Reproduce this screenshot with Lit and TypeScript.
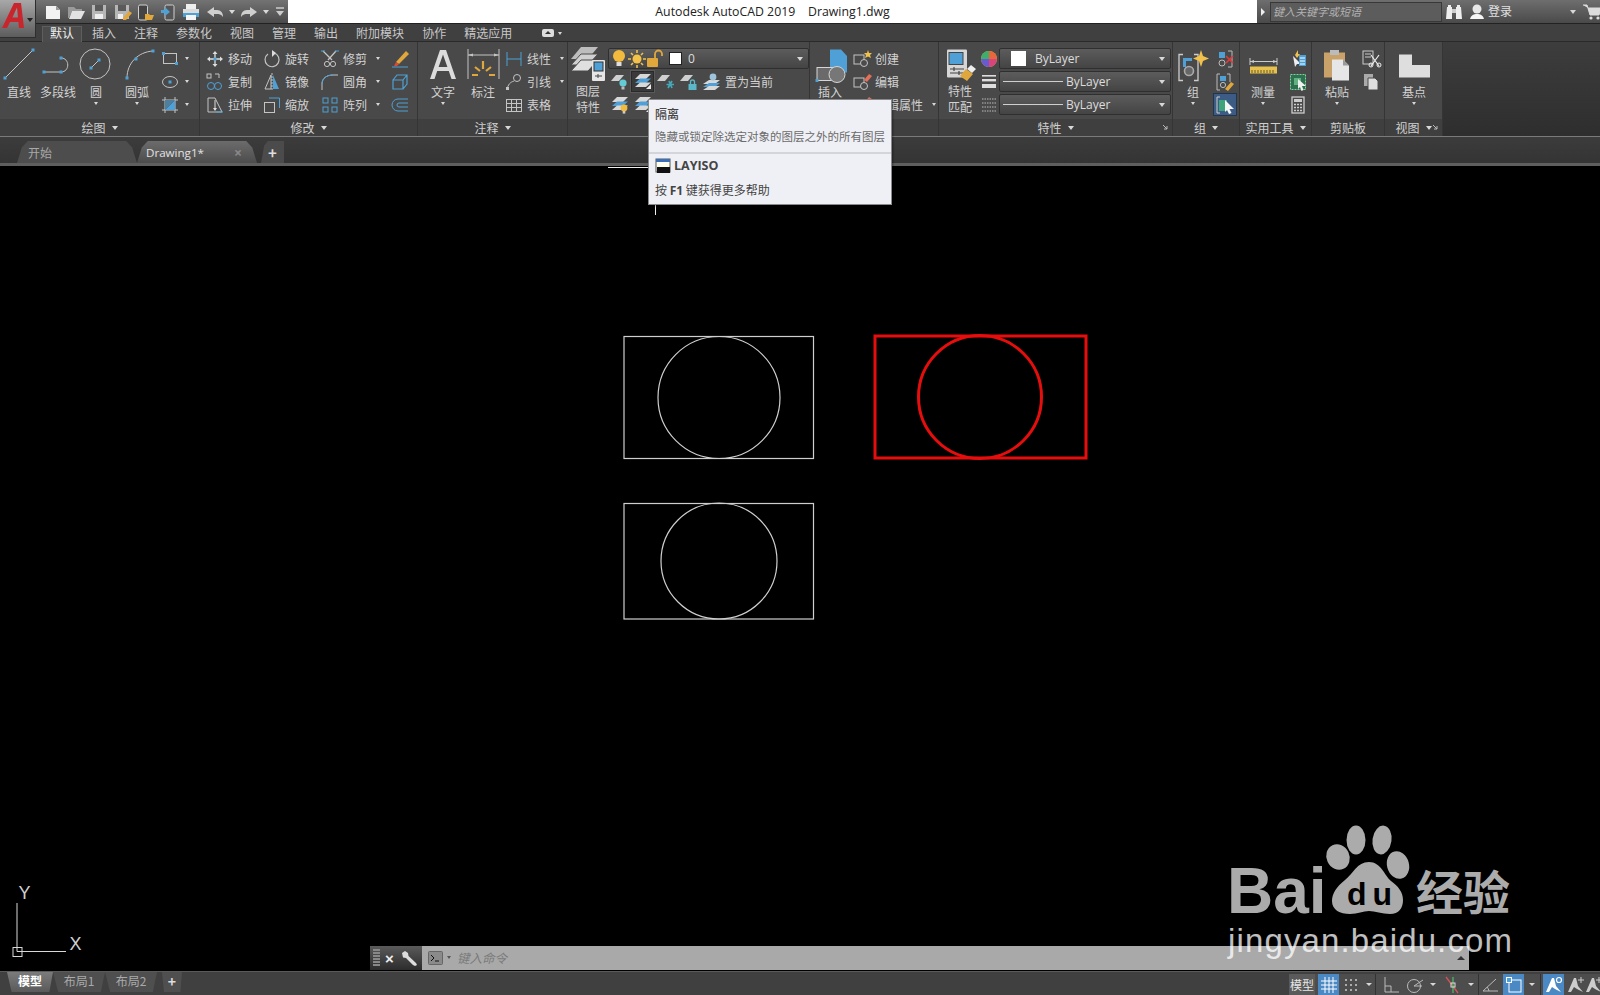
import { LitElement, html, css, svg } from "lit";
import { customElement } from "lit/decorators.js";

const B = "#4fa0d6", G = "#c4c4c4", L = "#e2e2e2", O = "#e0a83c", D = "#8e8e8e";
const ic = (c: any, s = 20) => html`<svg width=${s} height=${s} viewBox="0 0 ${s} ${s}">${c}</svg>`;
const pt = (x: number, y: number) => svg`<rect x=${x - 1.5} y=${y - 1.5} width="3" height="3" fill=${B}/>`;
const layerPlate = (y = 3) => svg`<path d="M1 ${y + 6}L6 ${y}H14L9 ${y + 6}Z" fill="#cfcfcf"/>`;
const stack = svg`<path d="M2 7L7 2H18L13 7Z" fill="#d8d8d8"/><path d="M2 11L7 6.5H18L13 11Z" fill=${B}/><path d="M2 15L7 10.5H18L13 15Z" fill="#d8d8d8"/>`;

const icons: Record<string, any> = {
  new: svg`<path d="M3 4H13L17 8V17H3Z" fill="#f2f2f2"/><path d="M13 4V8H17Z" fill="#999"/>`,
  open: svg`<path d="M2 5H8L10 7H16V9H6L3 16H2Z" fill="#9a9a9a"/><path d="M6 9H19L15 17H3Z" fill="#e2e2e2"/>`,
  save: svg`<path d="M3 3H17V17H3Z" fill="#b6b6b6"/><rect x="6" y="3" width="8" height="6" fill="#5a5a5a"/><rect x="6" y="12" width="8" height="5" fill="#eee"/>`,
  saveas: svg`<path d="M3 3H17V17H3Z" fill="#b6b6b6"/><rect x="6" y="3" width="8" height="6" fill="#5a5a5a"/><rect x="6" y="12" width="5" height="5" fill="#eee"/><path d="M11 16L17 9L20 11L14 18H11Z" fill=${O}/>`,
  phoneOpen: svg`<rect x="3.5" y="3" width="9" height="15" rx="1.5" fill="#444" stroke="#d0d0d0"/><path d="M10 12H14L15 13H19L17 18H10Z" fill=${O}/>`,
  phoneSave: svg`<rect x="7" y="3" width="9" height="15" rx="1.5" fill="#555" stroke="#d0d0d0"/><path d="M3 8H7V5L12 10L7 14V11H3Z" fill=${B}/>`,
  print: svg`<rect x="5" y="2" width="10" height="5" fill="#eee"/><rect x="2" y="7" width="16" height="4" fill="#dcdcdc"/><rect x="2" y="11" width="16" height="4" fill=${B}/><rect x="5" y="13" width="10" height="5" fill="#f4f4f4"/>`,
  undo: svg`<path d="M2 10L9 5V8H12C16 8 18 11 18 15C16 12 14 12 12 12H9V15Z" fill="#cfcfcf"/>`,
  redo: svg`<path d="M18 10L11 5V8H8C4 8 2 11 2 15C4 12 6 12 8 12H11V15Z" fill="#cfcfcf"/>`,
  custom: svg`<path d="M3 3H11" stroke="#ccc" stroke-width="1.5"/><path d="M3 6H11L7 11Z" fill="#ccc"/>`,
  line: svg`<path d="M6 33L34 5" stroke=${G} stroke-width="1"/>${pt(6, 33)}${pt(34, 5)}`,
  pline: svg`<path d="M6 27H23C32 27 32 13 23 13" fill="none" stroke=${G}/>${pt(6, 27)}${pt(23, 27)}${pt(23, 13)}`,
  circle: svg`<circle cx="19" cy="19" r="15" fill="none" stroke=${G}/><path d="M15 23L23 15" stroke=${G}/>${pt(15, 23)}${pt(23, 15)}`,
  arc: svg`<path d="M10 33C10 18 21 7 36 6" fill="none" stroke=${G}/>${pt(10, 33)}${pt(19, 14)}${pt(36, 6)}`,
  rect: svg`<rect x="3.5" y="4.5" width="13" height="10" fill="none" stroke=${G}/>${pt(3.5, 4.5)}${pt(16.5, 14.5)}`,
  ellipse: svg`<ellipse cx="10" cy="10" rx="7.5" ry="5.5" fill="none" stroke=${G}/>${pt(10, 10)}`,
  hatch: svg`<path d="M5 2V18M15 2V18M2 5H18M2 15H18" stroke=${G}/><path d="M5 15L15 5V15Z" fill=${B}/><path d="M5 5H15L5 15Z" fill="#4f7f9f"/>`,
  move: svg`<path d="M10 2L12.5 5H7.5ZM10 18L7.5 15H12.5ZM2 10L5 7.5V12.5ZM18 10L15 12.5V7.5Z" fill="#ddd"/><path d="M10 4V16M4 10H16" stroke="#ddd" stroke-width="1.3"/><rect x="8.5" y="8.5" width="3" height="3" fill=${B}/>`,
  rotate: svg`<path d="M6 5A7 7 0 1 0 12 4" fill="none" stroke=${G} stroke-width="1.2"/><path d="M10 1V8L14 4Z" fill="#ddd"/>`,
  trim: svg`<path d="M3 2L12 11M16 2L8 11" stroke=${G} stroke-width="1.3"/><circle cx="7" cy="15" r="2.6" fill="none" stroke=${G}/><circle cx="13" cy="15" r="2.6" fill="none" stroke=${G}/><path d="M1 2H5M15 2H19" stroke=${B}/>`,
  erase: svg`<path d="M6 13L16 2L19 5L9 15Z" fill=${O}/><path d="M6 13L9 15L7 17H4Z" fill="#d94a3a"/><path d="M2 18H18" stroke=${B}/>`,
  copy: svg`<rect x="2" y="2" width="4" height="4" fill="none" stroke=${G}/><path d="M10 2H14V6" fill="none" stroke=${G}/><circle cx="6" cy="14" r="3.5" fill="none" stroke=${B}/><circle cx="13" cy="14" r="3.5" fill="none" stroke=${B}/>`,
  mirror: svg`<path d="M9 3V17H3Z" fill="none" stroke=${G}/><path d="M11 3V17H17Z" fill=${B}/><path d="M10 1V19" stroke=${G} stroke-dasharray="2 1"/>`,
  fillet: svg`<path d="M2 18V12C2 6 7 3 13 3H18" fill="none" stroke=${G}/><path d="M2 12C2 6 7 3 13 3" fill="none" stroke=${B}/>`,
  d3: svg`<path d="M3 8H13V17H3Z M3 8L7 3H17V12L13 17M13 8L17 3" fill="none" stroke=${B} stroke-width="1.2"/>`,
  stretch: svg`<path d="M3 3H10L17 17H3Z" fill="none" stroke=${G}/><path d="M10 5V15" stroke="#ddd"/><path d="M8 13H12L10 16Z" fill="#ddd"/><path d="M11 17H18" stroke=${B}/>`,
  scale: svg`<rect x="2.5" y="7.5" width="10" height="10" fill="none" stroke=${G}/><path d="M7 3H17.5V13" fill="none" stroke=${B}/>`,
  array: svg`<g fill="none" stroke=${B}><rect x="3" y="3" width="5" height="5"/><rect x="12" y="3" width="5" height="5"/><rect x="3" y="12" width="5" height="5"/><rect x="12" y="12" width="5" height="5"/></g>`,
  offset: svg`<path d="M18 4H8A6 6 0 0 0 8 16H18M18 8H9A2 2 0 0 0 9 12H18" fill="none" stroke=${B}/>`,
  textA: svg`<path d="M7 34L17 5H23L33 34H28.5L25.8 26H14.2L11.5 34ZM15.6 22H24.4L20 9.5Z" fill="#dcdcdc" fill-rule="evenodd"/>`,
  dim: svg`<path d="M5 4V34M36 4V34M5 10H36" stroke=${G} fill="none"/><path d="M5 10L10 8.5V11.5ZM36 10L31 8.5V11.5Z" fill=${G}/><path d="M20 16V24M12 22L17 26M28 22L23 26M9 30H15M26 30H32" stroke=${O} stroke-width="2.2"/>`,
  linear: svg`<path d="M3 3V17M17 3V17M3 10H17" stroke=${B} fill="none"/>`,
  leader: svg`<path d="M3 17C5 10 8 10 10 9" fill="none" stroke=${G}/><circle cx="13" cy="6" r="3.5" fill="none" stroke=${G}/><rect x="2" y="15" width="3" height="3" fill=${G}/>`,
  table: svg`<rect x="2.5" y="4.5" width="15" height="12" fill="none" stroke=${G}/><path d="M2.5 8.5H17.5M2.5 12.5H17.5M7.5 4.5V16.5M12.5 4.5V16.5" stroke=${G}/>`,
  layerProps: svg`<path d="M3 14L13 2H30L20 14Z" fill="#bdbdbd"/><path d="M3 20L13 9H30L20 20Z" fill="#d0d0d0" stroke="#4b4b4b"/><path d="M3 26L13 15H30L20 26Z" fill="#e0e0e0" stroke="#4b4b4b"/><rect x="24" y="15" width="13" height="21" rx="1" fill="#e6e6e6"/><rect x="26" y="17" width="9" height="9" fill=${B} stroke="#333"/><path d="M27 31H34M30 29V33" stroke="#444"/>`,
  bulbOn: svg`<circle cx="10" cy="7" r="6" fill="#f2bb3e"/><rect x="7.5" y="13" width="5" height="4" fill="#ddd"/>`,
  sun: svg`<circle cx="10" cy="10" r="4.5" fill="#f2c24a"/><path d="M10 1V4M10 16V19M1 10H4M16 10H19M4 4L6 6M14 14L16 16M16 4L14 6M4 16L6 14" stroke="#f2c24a" stroke-width="1.6"/>`,
  lock: svg`<rect x="2" y="9" width="11" height="9" rx="1" fill=${O}/><path d="M10 9V5A3.5 3.5 0 0 1 17 5V7" fill="none" stroke=${O} stroke-width="1.8"/>`,
  lay1: svg`${layerPlate()}<circle cx="13" cy="11" r="3.6" fill="#63cbd6"/><rect x="11.5" y="14.5" width="3" height="3" fill="#bbb"/>`,
  layIso: svg`${stack}<path d="M13 17L18 12V17Z" fill="#eee"/>`,
  lay3: svg`${layerPlate()}<path d="M13 9L16 16M16 9L12 16M10.5 12.5H18" stroke="#45a8b8" stroke-width="1.7"/>`,
  lay4: svg`${layerPlate()}<rect x="9.5" y="12" width="8" height="6" fill="#5ab8c8"/><path d="M11.5 12V10A2 2 0 0 1 15.5 10V12" fill="none" stroke="#5ab8c8" stroke-width="1.3"/>`,
  laySet: svg`<path d="M1 12L7 8H18L13 12Z" fill="#d8d8d8"/><path d="M1 15L7 11H18L13 15Z" fill=${B}/><path d="M1 18L7 14H18L13 18Z" fill="#d8d8d8"/><circle cx="11" cy="5" r="3.4" fill="#9ec4dc"/>`,
  lay5: svg`${stack}<circle cx="14" cy="13" r="3.4" fill="#f2bb3e"/><rect x="12.7" y="16" width="2.6" height="2.6" fill="#ccc"/>`,
  insert: svg`<path d="M20 4.5H31L37 11V27.5H20Z" fill=${B}/><rect x="7" y="22.5" width="20" height="13" fill="#6a6a6a" stroke="#d6d6d6"/>${pt(7, 35.5)}<circle cx="27" cy="29.5" r="8" fill="#777" stroke="#d6d6d6"/>`,
  blkCreate: svg`<rect x="2" y="6" width="10" height="9" fill="none" stroke=${G}/><circle cx="12" cy="14" r="3.5" fill="#4b4b4b" stroke=${G}/><path d="M16 1L17 4L20 4L18 6L19 9L16 7.5L13 9L14 6L12 4L15 4Z" fill="#f1c14c"/>`,
  blkEdit: svg`<rect x="2" y="6" width="10" height="9" fill="none" stroke=${G}/><circle cx="12" cy="14" r="3.5" fill="#4b4b4b" stroke=${G}/><path d="M12 8L17 2L20 4L15 10Z" fill="#e2705a"/>`,
  match: svg`<rect x="7" y="4.5" width="20" height="28" rx="1" fill="#d6d6d6"/><rect x="9" y="7.5" width="14" height="12" fill=${B} stroke="#444"/><path d="M10 24H24M10 28H24M14 22V26M19 26V30" stroke="#444" stroke-width="1.2"/><path d="M20 31L26 24L33 29L27 36Z" fill=${O}/><path d="M27 24L31 20L36 24L32 28Z" fill="#eee"/>`,
  wheel: svg`<circle cx="10" cy="10" r="8" fill="#d8b13a"/><path d="M10 10L10 2A8 8 0 0 1 18 10Z" fill="#e8663c"/><path d="M10 10L18 10A8 8 0 0 1 10 18Z" fill="#d8457a"/><path d="M10 10L10 18A8 8 0 0 1 2 10Z" fill="#6a5ad0"/><path d="M10 10L2 10A8 8 0 0 1 10 2Z" fill="#3cb06a"/>`,
  weight: svg`<rect x="3" y="3" width="14" height="1.6" fill="#ddd"/><rect x="3" y="7" width="14" height="2.4" fill="#ddd"/><rect x="3" y="12" width="14" height="4" fill="#ddd"/>`,
  ltype: svg`<path d="M3 4H17M3 8H17M3 12H17M3 16H17" stroke="#bbb" stroke-dasharray="1.5 1"/>`,
  group: svg`<path d="M10 9.5H6V35.5H10M21 9.5H25V35.5H21" fill="none" stroke="#ccc" stroke-width="1.3"/><path d="M10 13H19V16H13V22H10Z" fill=${B}/><circle cx="16" cy="26" r="4.5" fill="#666" stroke="#aaa" stroke-width="1.6"/><path d="M28 5L30 11L36 13.5L30 16L28 22L26 16L20 13.5L26 11Z" fill="#f1c14c"/>`,
  ungroup: svg`<rect x="4" y="3" width="6" height="6" fill=${B}/><circle cx="7" cy="14" r="3" fill="none" stroke="#bbb"/><path d="M13 2H17V18H13" fill="none" stroke="#bbb"/><path d="M11 7L18 14M18 7L11 14" stroke="#e03b3b" stroke-width="1.6"/>`,
  grpEdit: svg`<path d="M5 2H2V18H5M12 2H15V10" fill="none" stroke="#bbb"/><rect x="5" y="4" width="6" height="5" fill=${B}/><circle cx="8" cy="13" r="2.6" fill="none" stroke="#bbb"/><path d="M10 17L16 10L19 12L13 19Z" fill=${O}/>`,
  grpSel: svg`<path d="M5 2H2V18H5" fill="none" stroke="#ccc"/><rect x="4" y="5" width="8" height="11" fill="#3ea27a"/><path d="M10 5L19 14H14.5L16.5 18L14 19L12 15L10 17Z" fill="#f5f5f5"/>`,
  measure: svg`<path d="M7 13V20M34 13V20M7 16.5H34" stroke="#ccc" fill="none"/><path d="M7 16.5L11 15V18ZM34 16.5L30 15V18Z" fill="#ccc"/><rect x="7" y="21.5" width="27" height="7" fill="#e6c150"/><path d="M9 25V28M12 25V28M15 25V28M18 25V28M21 25V28M24 25V28M27 25V28M30 25V28" stroke="#6a5a20"/>`,
  qsel: svg`<path d="M5 7L13 15H9L7 18Z" fill="#eee"/><rect x="11" y="6" width="7" height="11" fill=${B}/><path d="M12 9H17M12 12H17M12 15H17" stroke="#fff"/><path d="M7 6L10 1V5L12 5L9 9Z" fill="#f1c14c"/>`,
  qsel2: svg`<rect x="2.5" y="2.5" width="15" height="15" fill="#2d6f4f" stroke="#7fd49c" stroke-dasharray="2 1"/><rect x="6" y="6" width="7" height="7" fill="#63b083"/><path d="M10 7L18 14H14L15.5 18L13.5 19L12 15L10 17Z" fill="#f0f0f0"/>`,
  calc: svg`<rect x="4" y="2" width="12" height="16" fill="none" stroke="#ccc" stroke-width="1.3"/><rect x="6" y="4" width="8" height="3" fill="#ccc"/><path d="M6 9.5H14M6 12.5H14M6 15.5H14" stroke="#ccc" stroke-dasharray="2 1" stroke-width="1.6"/>`,
  paste: svg`<path d="M7 7.5H28V32.5H7Z" fill="#c9a269"/><rect x="13" y="5" width="9" height="5" fill="#bbb"/><path d="M15 14.5H26L32 20.5V35.5H15Z" fill="#e6e6e6"/><path d="M26 14.5V20.5H32Z" fill="#999"/>`,
  cut: svg`<rect x="2" y="2" width="10" height="13" fill="none" stroke="#ccc"/><path d="M4 5H10M4 8H10" stroke="#ccc"/><path d="M10 6L18 17M18 6L10 17" stroke="#eee" stroke-width="1.2"/><circle cx="10" cy="16" r="2" fill="none" stroke="#eee"/><circle cx="18" cy="16" r="2" fill="none" stroke="#eee"/>`,
  copy2: svg`<rect x="3" y="2" width="9" height="12" fill="#aaa"/><path d="M7 6H14L17 9V18H7Z" fill="#ddd" stroke="#4b4b4b"/>`,
  base: svg`<path d="M5 9.5H18V20H36V32.5H5Z" fill="#dedede"/>`,
  launch: svg`<path d="M2 2L6 6M6 3V6H3" stroke="#bbb" fill="none"/>`,
  wrench: svg`<path d="M2 4L5 2L8 4L8.5 7L16 14L17 16L15 17L13 16L6 9L3 8.5Z" fill="#ddd"/>`,
  cmd: svg`<rect x="1.5" y="2.5" width="14" height="13" rx="1" fill="#8a8a8a" stroke="#666"/><path d="M4 6L7 9L4 12M8 12H12" stroke="#111" fill="none"/>`,
  grid: svg`<path d="M6 2V18M10 2V18M14 2V18M2 6H18M2 10H18M2 14H18" stroke="#fff"/>`,
  dots: svg`<g fill="#ccc"><circle cx="5" cy="5" r="1"/><circle cx="10" cy="5" r="1"/><circle cx="15" cy="5" r="1"/><circle cx="5" cy="10" r="1"/><circle cx="10" cy="10" r="1"/><circle cx="15" cy="10" r="1"/><circle cx="5" cy="15" r="1"/><circle cx="10" cy="15" r="1"/><circle cx="15" cy="15" r="1"/></g>`,
  ortho: svg`<path d="M3 2V17H17M3 11H9V17" fill="none" stroke="#bbb"/>`,
  polar: svg`<circle cx="9" cy="11" r="6.5" fill="none" stroke="#bbb"/><path d="M9 11L18 5M9 11H17" stroke="#bbb"/>`,
  isnap: svg`<path d="M4 2L16 18" stroke="#d65454" stroke-width="1.3"/><path d="M11 2V18" stroke="#4fb46a" stroke-width="1.3"/><rect x="9" y="8" width="4" height="4" fill="none" stroke="#ddd"/>`,
  angle: svg`<path d="M16 4L3 16H18M9 16A8 8 0 0 0 7 12" fill="none" stroke="#bbb"/>`,
  box: svg`<rect x="5" y="5" width="12" height="12" fill="none" stroke="#fff"/><rect x="2.5" y="2.5" width="5" height="5" fill=${B} stroke="#fff"/>`,
  anno: svg`<path d="M2 17L8 3L10 3L12 11L17 17L11 14L8 12L5 17Z" fill="#fff"/><circle cx="15" cy="5" r="2.5" fill="none" stroke="#fff" stroke-width="1.2"/>`,
  anno2: svg`<path d="M2 17L8 3L10 3L12 11L17 17L11 14L8 12L5 17Z" fill="#ccc"/><path d="M15 2V8M12 5H18" stroke="#ccc"/>`,
  binoc: svg`<path d="M3 5H8V17H2ZM12 5H17L18 17H12Z" fill="#eee"/><rect x="8" y="7" width="4" height="4" fill="#ccc"/><path d="M4 3H7V5H4ZM13 3H16V5H13Z" fill="#eee"/>`,
  user: svg`<circle cx="10" cy="7" r="4.5" fill="#e8e8e8"/><path d="M3 17C4 13 7 12 10 12C13 12 16 13 17 17Z" fill="#f6f6f6"/>`,
  cart: svg`<path d="M1 3H5L8 13H17L19 6H6" fill="#ddd" stroke="#ddd"/><circle cx="9" cy="16" r="1.6" fill="#ddd"/><circle cx="16" cy="16" r="1.6" fill="#ddd"/>`,
  iso: svg`<rect x="1" y="1" width="14" height="13" fill="#ffffee" stroke="#555"/><rect x="1" y="1" width="14" height="3" fill="#3d6fb8"/><rect x="2" y="9" width="13" height="6" fill="#111"/>`,
};

const I = (n: string, s = 20) => ic(icons[n], s);
const caret = html`<i class="caret"></i>`;

const big = (label: any, icon: string, w: number, hasCaret = true, two = false) => html`
  <div class="big" style="width:${w}px">
    <div class="bigicon">${I(icon, 40)}</div>
    <div class=${two ? "lbl two" : "lbl"}>${label}</div>
    ${hasCaret ? caret : ""}
  </div>`;

const sm = (icon: string, text = "", c = false, active = false) => html`
  <div class=${active ? "sm on" : "sm"}>${I(icon)}${text ? html`<span>${text}</span>` : ""}${c ? caret : ""}</div>`;

const panel = (w: number, title: string, hasCaret: boolean, launcher: boolean, body: any) => html`
  <section class="panel" style="width:${w}px">
    <div class="pbody">${body}</div>
    <div class="ptitle"><span>${title}</span>${hasCaret ? caret : ""}${launcher ? html`<span class="launch">${I("launch", 8)}</span>` : ""}</div>
  </section>`;

const drop = (content: any, cls = "drop") => html`<div class=${cls}>${content}<i class="caret end"></i></div>`;
const layerRow = (items: string[], active = -1, extra: any = "") => html`
  <div class="lrow">${items.map((n, i) => html`<div class=${i === active ? "lcell on" : "lcell"}>${I(n)}</div>`)}${extra}</div>`;

@customElement("app-root")
export class AppRoot extends LitElement {
  static styles = css`
    :host { display: flex; flex-direction: column; position: relative; width: 1600px; height: 995px; overflow: hidden; background: #000;
      font-family: "Noto Sans CJK SC", "Noto Sans", sans-serif; font-size: 12px; color: #d2d2d2; }
    svg { display: block; flex: none; overflow: visible; }
    .caret { display: block; flex: none; width: 0; height: 0; border-left: 3.5px solid transparent; border-right: 3.5px solid transparent; border-top: 4px solid #d8d8d8; }
    .caret.end { margin-left: auto; }

    .titlebar { display: flex; height: 23px; flex: none; }
    .qat { width: 288px; flex: none; box-sizing: border-box; padding-left: 41.5px; display: flex; align-items: center; background: linear-gradient(#737373, #4a4a4a); }
    .qat .q { width: 23px; flex: none; display: flex; justify-content: center; }
    .qat .u { width: 20px; flex: none; display: flex; justify-content: center; }
    .qat .u.first { margin-left: 2.5px; }
    .qat .c { width: 14px; flex: none; display: flex; justify-content: center; }
    .logo { position: absolute; left: 0; top: 0; width: 36px; height: 38px; box-sizing: border-box; background: linear-gradient(#a8a8a8, #5c5c5c); border-right: 1px solid #2e2e2e; border-bottom: 1px solid #2e2e2e; z-index: 3; }
    .logo .caret { position: absolute; left: 27px; top: 18px; border-top-color: #222; }
    .doc { flex: 1; background: #fff; color: #222; display: flex; align-items: center; justify-content: center; font-family: "Open Sans", sans-serif; font-size: 12.3px; white-space: pre; }
    .right { width: 343px; flex: none; display: flex; align-items: center; background: linear-gradient(#6e6e6e, #4a4a4a); box-sizing: border-box; padding-left: 4px; }
    .tri { width: 0; height: 0; border-top: 4px solid transparent; border-bottom: 4px solid transparent; border-left: 4px solid #eee; margin-right: 5px; flex: none; }
    .search { width: 172px; height: 20px; flex: none; box-sizing: border-box; background: #5c5c5c; border: 1px solid #383838; color: #b2b2b2; font-style: italic; font-size: 11px; display: flex; align-items: center; padding: 0 0 2px 2px; margin-right: 2px; }
    .user { margin-left: 3px; }
    .login { margin-left: 1px; color: #e0e0e0; width: 81.5px; flex: none; padding-bottom: 2px; box-sizing: border-box; }
    .cartgap { width: 6.5px; flex: none; }
    .tabs { display: flex; flex: none; height: 19px; box-sizing: border-box; gap: 18px; padding: 1px 0 0 50px; align-items: center; background: #404040; border-top: 1px solid #222; border-bottom: 1px solid #2a2a2a; position: relative; }
    .tabs span { position: relative; line-height: 18px; white-space: nowrap; color: #c8c8c8; }
    .tabs span.act { color: #eee; }
    .tabs span.act::before { content: ""; position: absolute; z-index: 0; left: -8px; right: -8px; top: 2px; bottom: -1px; background: #4b4b4b; border: 1px solid #5e5e5e; border-bottom: none; }
    .tabs b { position: relative; font-weight: 400; }
    .pill { width: 12px; height: 8px; background: #ddd; border-radius: 2px; margin-left: 12px; position: relative; }
    .pill::after { content: ""; position: absolute; left: 3px; top: 2px; width: 0; height: 0; border-left: 3px solid transparent; border-right: 3px solid transparent; border-bottom: 3px solid #333; }
    .tabs .caret { margin-left: -14px; border-left-width: 2.5px; border-right-width: 2.5px; border-top-width: 3px; }

    .ribbon { display: flex; flex: none; height: 95px; background: linear-gradient(#3d3d3d, #2e2e2e); border-bottom: 1px solid #7a7a7a; box-sizing: border-box; }
    .panel { flex: none; box-sizing: border-box; display: flex; flex-direction: column; background: #494949; border-right: 1px solid #353535; position: relative; }
    .pbody { flex: 1; display: flex; min-height: 0; }
    .ptitle { height: 17px; flex: none; background: #3f3f3f; display: flex; align-items: center; justify-content: center; gap: 6px; color: #cfcfcf; }
    .launch { position: absolute; right: 3px; bottom: 5px; }
    .big { flex: none; display: flex; flex-direction: column; align-items: center; padding-top: 4px; box-sizing: border-box; }
    .bigicon { height: 37px; display: flex; align-items: center; justify-content: center; }
    .lbl { line-height: 18px; white-space: nowrap; text-align: center; }
    .lbl.two { line-height: 16px; }
    .big .caret { margin-top: 1px; border-left-width: 2.5px; border-right-width: 2.5px; border-top-width: 3px; }
    .col { flex: none; display: flex; flex-direction: column; padding-top: 5px; box-sizing: border-box; }
    .sm { height: 23px; display: flex; align-items: center; gap: 3px; white-space: nowrap; }
    .sm .caret { margin-left: 6px; border-left-width: 2.5px; border-right-width: 2.5px; border-top-width: 3px; }
    .sm.on { width: 22px; height: 21px; margin: 1px 0 1px -1px; background: #3c5c86; outline: 1px solid #23344e; justify-content: center; }
    .drawc .sm { gap: 5px; } .drawc .sm .caret { margin-left: 0; }
    .pad5 { width: 5px; flex: none; }
    .pad3 { width: 3px; flex: none; }
    .ml2 { margin-left: 2px; } .ml3 { margin-left: 3px; } .mlm1 { margin-left: -1px; }
    .w57 { width: 57px; } .w58 { width: 58px; } .w70 { width: 70px; }
    .wc { width: 20px; margin-left: -2px; }
    .layers { width: 201px; flex: none; display: flex; flex-direction: column; padding-top: 6px; box-sizing: border-box; }
    .drop { height: 21px; box-sizing: border-box; background: linear-gradient(#5c5c5c, #444); border: 1px solid #2f2f2f; border-radius: 2px; display: flex; align-items: center; padding: 0 5px 0 0; font-family: "Open Sans", sans-serif; color: #ddd; }
    .drop.lay { padding-left: 1px; }
    .drop.lay .lcell { width: 18px; }
    .lrow { height: 23px; display: flex; align-items: center; }
    .drop + .lrow { margin-top: 1px; }
    .lcell { width: 23.2px; height: 19px; flex: none; display: flex; align-items: center; justify-content: center; box-sizing: border-box; }
    .lrow .lcell { height: 21px; }
    .lcell.on { background: #3a3a3a; border: 1px solid #2a2a2a; box-shadow: 0 0 0 1px #5a5a5a; }
    .lrow span { margin-left: 1px; }
    .sw { width: 13px; height: 13px; background: #fff; border: 1px solid #222; margin: 0 6px 0 5px; flex: none; box-sizing: border-box; }
    .props { display: flex; flex-direction: column; gap: 2px; width: 172px; padding-top: 6px; box-sizing: border-box; flex: none; }
    .swb { width: 15px; height: 15px; background: #fff; margin: 0 9px 0 11px; flex: none; }
    .lline { width: 60px; height: 1px; background: #cfcfcf; margin: 0 3px 0 3px; flex: none; }

    .doctabs { flex: none; height: 26px; background: linear-gradient(#3c3c3c, #343434); display: flex; align-items: flex-end; padding-left: 17px; box-sizing: border-box; }
    .dt { height: 22px; display: flex; align-items: center; flex: none; box-sizing: border-box; clip-path: polygon(0 100%, 4% 30%, 9% 0, 91% 0, 96% 30%, 100% 100%); }
    .dt.a { width: 120px; background: #4d4d4d; color: #a8a8a8; padding-left: 11px; }
    .dt.b { width: 120px; background: linear-gradient(#6c6c6c, #4c4c4c); color: #e2e2e2; padding-left: 9px; font-family: "Open Sans", sans-serif; font-size: 11.6px; justify-content: space-between; padding-right: 15px; }
    .dt.c { width: 23px; background: #4b4b4b; margin-left: 4px; justify-content: center; color: #ddd; font-size: 15px; font-weight: 700; clip-path: polygon(0 100%, 14% 20%, 30% 0, 100% 0, 100% 100%); }
    .dt.b i { font-style: normal; color: #888; font-weight: 700; font-size: 14px; }
    .strip { height: 3px; flex: none; background: #5e5e5e; }

    .canvas { flex: 1; min-height: 0; position: relative; background: #000; }
    .drawing { position: absolute; inset: 0; width: 100%; height: 100%; }
    .drawing text { font-family: "Liberation Sans", sans-serif; font-weight: 400; }
    .cmdline { position: absolute; left: 370px; right: 131px; bottom: 1px; height: 24px; display: flex; background: #a9a9a9; }
    .cmdleft { width: 52px; flex: none; background: linear-gradient(#5a5a5a, #2c2c2c); display: flex; align-items: center; box-sizing: border-box; padding-left: 3px; color: #eee; }
    .grip { width: 7px; height: 18px; flex: none; background: repeating-linear-gradient(#888 0 2px, transparent 2px 3px); margin-right: 3px; }
    .cmdx { font-family: "Liberation Sans", sans-serif; font-weight: 700; font-size: 15px; width: 13px; text-align: center; margin-right: 4px; }
    .cmdr { flex: 1; display: flex; align-items: center; padding: 0 0 1px 5px; color: #7a7a7a; font-style: italic; font-size: 12.5px; }
    .cmdr .caret { margin: 0 6px 0 3px; border-left-width: 2.5px; border-right-width: 2.5px; border-top-width: 3px; border-top-color: #555; }
    .cmdup { margin-left: auto; margin-right: 4px; width: 0; height: 0; border-left: 4px solid transparent; border-right: 4px solid transparent; border-bottom: 4px solid #333; }
    .mark { position: absolute; left: 1220px; top: 640px; width: 300px; height: 165px; pointer-events: none; }
    .mark text { font-family: "Liberation Sans", sans-serif; }
    .cjk { font-family: "Noto Sans CJK SC", sans-serif !important; }

    .status { flex: none; height: 24px; background: #404040; border-top: 1px solid #5a5a5a; box-sizing: border-box; display: flex; align-items: flex-end; padding-left: 7px; position: relative; }
    .lt { height: 20px; display: flex; align-items: center; justify-content: center; flex: none; color: #aaa; background: #4f4f4f; clip-path: polygon(0 0, 100% 0, 92% 100%, 10% 100%); align-self: flex-start; padding-bottom: 3px; box-sizing: border-box; }
    .lt.a { width: 46px; background: linear-gradient(#7b7b7b, #5a5a5a); color: #fff; font-weight: 700; }
    .lt.m { width: 52px; }
    .lt.p { width: 20px; margin-left: 5px; color: #ddd; font-weight: 700; font-size: 14px; }
    .stright { margin-left: auto; display: flex; align-items: flex-end; height: 21px; width: 311px; overflow: hidden; flex: none; background: #4d4d4d; }
    .st { height: 21px; flex: none; display: flex; align-items: center; justify-content: center; }
    .st .caret { border-left-width: 3px; border-right-width: 3px; border-top-width: 3.5px; }
    .st.blue { background: #4a89c4; }
    .st.label { background: #5a5a5a; color: #e6e6e6; margin-right: 3px; }
    .st.sep { border-left: 1px solid #333; box-sizing: border-box; }
    .mb4 { margin-left: 4px; }

    .tip { position: absolute; left: 648px; top: 99px; width: 244px; height: 106px; box-sizing: border-box; background: #eff0f5; border: 1px solid #8a8a8a; color: #4a4a4a; padding: 4px 6px; z-index: 4; box-shadow: 1px 1px 2px rgba(0,0,0,.4); }
    .tip .h { font-weight: 500; line-height: 20px; color: #444; }
    .tip .d { line-height: 22px; margin-top: 1px; color: #6b6b6b; white-space: nowrap; font-size: 11.5px; }
    .tip hr { border: none; border-top: 2px solid #d4d5da; margin: 5px -6px 1px; }
    .tip .cmd { display: flex; align-items: center; gap: 3px; font-family: "Open Sans", sans-serif; font-weight: 700; font-size: 12.5px; line-height: 22px; color: #444; margin-bottom: 1px; }
    .tip .help { line-height: 24px; color: #444; }
    .tip .help b { font-family: "Open Sans", sans-serif; }
  `;

  render() {
    return html`
      <div class="titlebar">
        <div class="qat">
          ${["new", "open", "save", "saveas", "phoneOpen", "phoneSave", "print"].map((n) => html`<div class="q">${I(n)}</div>`)}
          <div class="u first">${I("undo")}</div><div class="c">${caret}</div>
          <div class="u">${I("redo")}</div><div class="c">${caret}</div>
          <div class="c">${I("custom", 14)}</div>
        </div>
        <div class="doc">Autodesk AutoCAD 2019    Drawing1.dwg</div>
        <div class="right">
          <i class="tri"></i>
          <div class="search">键入关键字或短语</div>
          ${I("binoc")}<span class="user">${I("user")}</span>
          <div class="login">登录</div>
          ${caret}<span class="cartgap"></span>${I("cart")}
        </div>
      </div>
      <div class="logo">
        <svg width="26" height="30" viewBox="0 0 26 30"><path d="M2 28L14 3H21L24 28H19L18.4 22H10L7 28ZM12.4 17.5H18L17 7.5Z" fill="#c8262c" fill-rule="evenodd"/></svg>
        <i class="caret"></i>
      </div>
      <nav class="tabs">
        <span class="act"><b>默认</b></span>
        ${["插入", "注释", "参数化", "视图", "管理", "输出", "附加模块", "协作", "精选应用"].map((t) => html`<span>${t}</span>`)}
        <i class="pill"></i><i class="caret"></i>
      </nav>
      <div class="ribbon">
        ${panel(200, "绘图", true, false, html`
          ${big("直线", "line", 38, false)}${big("多段线", "pline", 40, false)}${big("圆", "circle", 36)}${big("圆弧", "arc", 46)}
          <div class="col drawc">${sm("rect", "", true)}${sm("ellipse", "", true)}${sm("hatch", "", true)}</div>`)}
        ${panel(218, "修改", true, false, html`
          <div class="pad5"></div>
          <div class="col w57">${sm("move", "移动")}${sm("copy", "复制")}${sm("stretch", "拉伸")}</div>
          <div class="col w58">${sm("rotate", "旋转")}${sm("mirror", "镜像")}${sm("scale", "缩放")}</div>
          <div class="col w70">${sm("trim", "修剪", true)}${sm("fillet", "圆角", true)}${sm("array", "阵列", true)}</div>
          <div class="col">${sm("erase")}${sm("d3")}${sm("offset")}</div>`)}
        ${panel(150, "注释", true, false, html`
          <div class="pad3"></div>
          ${big("文字", "textA", 44)}${big("标注", "dim", 36, false)}
          <div class="col ml3">${sm("linear", "线性", true)}${sm("leader", "引线", true)}${sm("table", "表格")}</div>`)}
        ${panel(242, "", false, false, html`
          ${big(html`图层<br />特性`, "layerProps", 40, false, true)}
          <div class="layers">
            ${drop(html`<span class="lcell">${I("bulbOn")}</span><span class="lcell">${I("sun")}</span><span class="lcell">${I("lock")}</span><i class="sw"></i><span>0</span>`, "drop lay")}
            ${layerRow(["lay1", "layIso", "lay3", "lay4", "laySet"], 1, html`<span>置为当前</span>`)}
            ${layerRow(["lay5", "layIso"])}
          </div>`)}
        ${panel(129, "", false, false, html`
          ${big("插入", "insert", 40, false)}
          <div class="col ml2">${sm("blkCreate", "创建")}${sm("blkEdit", "编辑")}${sm("blkEdit", "编辑属性", true)}</div>`)}
        ${panel(234, "特性", true, true, html`
          ${big(html`特性<br />匹配`, "match", 42, false, true)}
          <div class="col wc">${sm("wheel")}${sm("weight")}${sm("ltype")}</div>
          <div class="props">
            ${drop(html`<i class="swb"></i><span>ByLayer</span>`)}
            ${drop(html`<i class="lline"></i><span>ByLayer</span>`)}
            ${drop(html`<i class="lline"></i><span>ByLayer</span>`)}
          </div>`)}
        ${panel(67, "组", true, false, html`
          ${big("组", "group", 40)}
          <div class="col ml2">${sm("ungroup")}${sm("grpEdit")}${sm("grpSel", "", false, true)}</div>`)}
        ${panel(72, "实用工具", true, false, html`
          ${big("测量", "measure", 46)}
          <div class="col ml2">${sm("qsel")}${sm("qsel2")}${sm("calc")}</div>`)}
        ${panel(73, "剪贴板", false, false, html`
          ${big("粘贴", "paste", 50)}
          <div class="col mlm1">${sm("cut")}${sm("copy2")}</div>`)}
        ${panel(58, "视图", true, true, html`${big("基点", "base", 58)}`)}
      </div>
      <div class="doctabs">
        <div class="dt a">开始</div>
        <div class="dt b"><span>Drawing1*</span><i>×</i></div>
        <div class="dt c">+</div>
      </div>
      <div class="strip"></div>
      <div class="canvas">
        <svg class="drawing" viewBox="0 166 1600 805">
          <path d="M608 167.5H655M655.5 167V215" stroke="#eee" fill="none"/>
          <g fill="none" stroke="#cfcfcf" stroke-width="1.2">
            <rect x="624" y="336.5" width="189.5" height="122"/>
            <circle cx="719" cy="397.5" r="61"/>
            <rect x="624" y="503.5" width="189.5" height="115.5"/>
            <circle cx="719" cy="561" r="58"/>
          </g>
          <g fill="none" stroke="#e60d0d" stroke-width="3">
            <rect x="875" y="336" width="211" height="122"/>
            <circle cx="980" cy="397" r="61.5"/>
          </g>
          <g fill="none" stroke="#d8d8d8" stroke-width="1">
            <path d="M17 903V951.5H66"/>
            <rect x="13" y="947.5" width="9" height="9"/>
          </g>
          <text x="24.5" y="899" font-size="18" text-anchor="middle" fill="#d0d0d0">Y</text>
          <text x="75.5" y="950" font-size="18" text-anchor="middle" fill="#d0d0d0">X</text>
        </svg>
        <div class="cmdline">
          <div class="cmdleft"><i class="grip"></i><span class="cmdx">×</span>${I("wrench", 18)}</div>
          <div class="cmdr">${I("cmd", 17)}<i class="caret"></i>键入命令<i class="cmdup"></i></div>
        </div>
        <svg class="mark" viewBox="1220 806 300 165">
          <g fill="#ababab">
            <text x="1227" y="913" font-size="64" font-weight="700">Bai</text>
            <ellipse cx="1356" cy="840" rx="9.5" ry="14.5"/>
            <ellipse cx="1382" cy="840" rx="9.5" ry="14.5" transform="rotate(8 1382 840)"/>
            <ellipse cx="1338" cy="857" rx="11.5" ry="13" transform="rotate(-25 1338 857)"/>
            <ellipse cx="1398" cy="865" rx="11" ry="14" transform="rotate(-15 1398 865)"/>
            <path d="M1369 862C1357 862 1353 874 1345 880C1336 887 1332 894 1332 901C1332 910 1340 914 1350 914C1358 914 1363 911 1369 911C1375 911 1382 914 1390 914C1399 914 1403 908 1403 900C1403 892 1398 886 1391 881C1384 875 1381 862 1369 862Z"/>
            <text x="1416" y="910" font-size="47" font-weight="700" class="cjk">经验</text>
          </g>
          <text x="1347" y="905" font-size="32" font-weight="700" fill="#000" textLength="45">du</text>
          <text x="1228" y="952" font-size="33" textLength="284" fill="rgba(255,255,255,.75)">jingyan.baidu.com</text>
        </svg>
      </div>
      <div class="status">
        <div class="lt a">模型</div><div class="lt m">布局1</div><div class="lt m">布局2</div><div class="lt p">+</div>
        <div class="stright">
          <div class="st label" style="width:26px">模型</div>
          <div class="st blue" style="width:21px">${I("grid")}</div>
          <div class="st" style="width:24px">${I("dots")}</div>
          <div class="st" style="width:12px">${caret}</div>
          <div class="st sep" style="width:6px"></div>
          <div class="st" style="width:22px">${I("ortho")}</div>
          <div class="st" style="width:24px">${I("polar")}</div>
          <div class="st" style="width:12px">${caret}</div>
          <div class="st" style="width:25px">${I("isnap")}</div>
          <div class="st" style="width:14px">${caret}</div>
          <div class="st sep" style="width:3px"></div>
          <div class="st" style="width:18px">${I("angle")}</div>
          <div class="st blue mb4" style="width:21px">${I("box")}</div>
          <div class="st" style="width:16px">${caret}</div>
          <div class="st sep" style="width:3px"></div>
          <div class="st blue" style="width:21px">${I("anno")}</div>
          <div class="st" style="width:24px">${I("anno2")}</div>
          <div class="st" style="width:12px">${I("anno2")}</div>
        </div>
      </div>
      <div class="tip">
        <div class="h">隔离</div>
        <div class="d">隐藏或锁定除选定对象的图层之外的所有图层</div>
        <hr />
        <div class="cmd">${I("iso", 16)}LAYISO</div>
        <div class="help">按 <b>F1</b> 键获得更多帮助</div>
      </div>
    `;
  }
}
